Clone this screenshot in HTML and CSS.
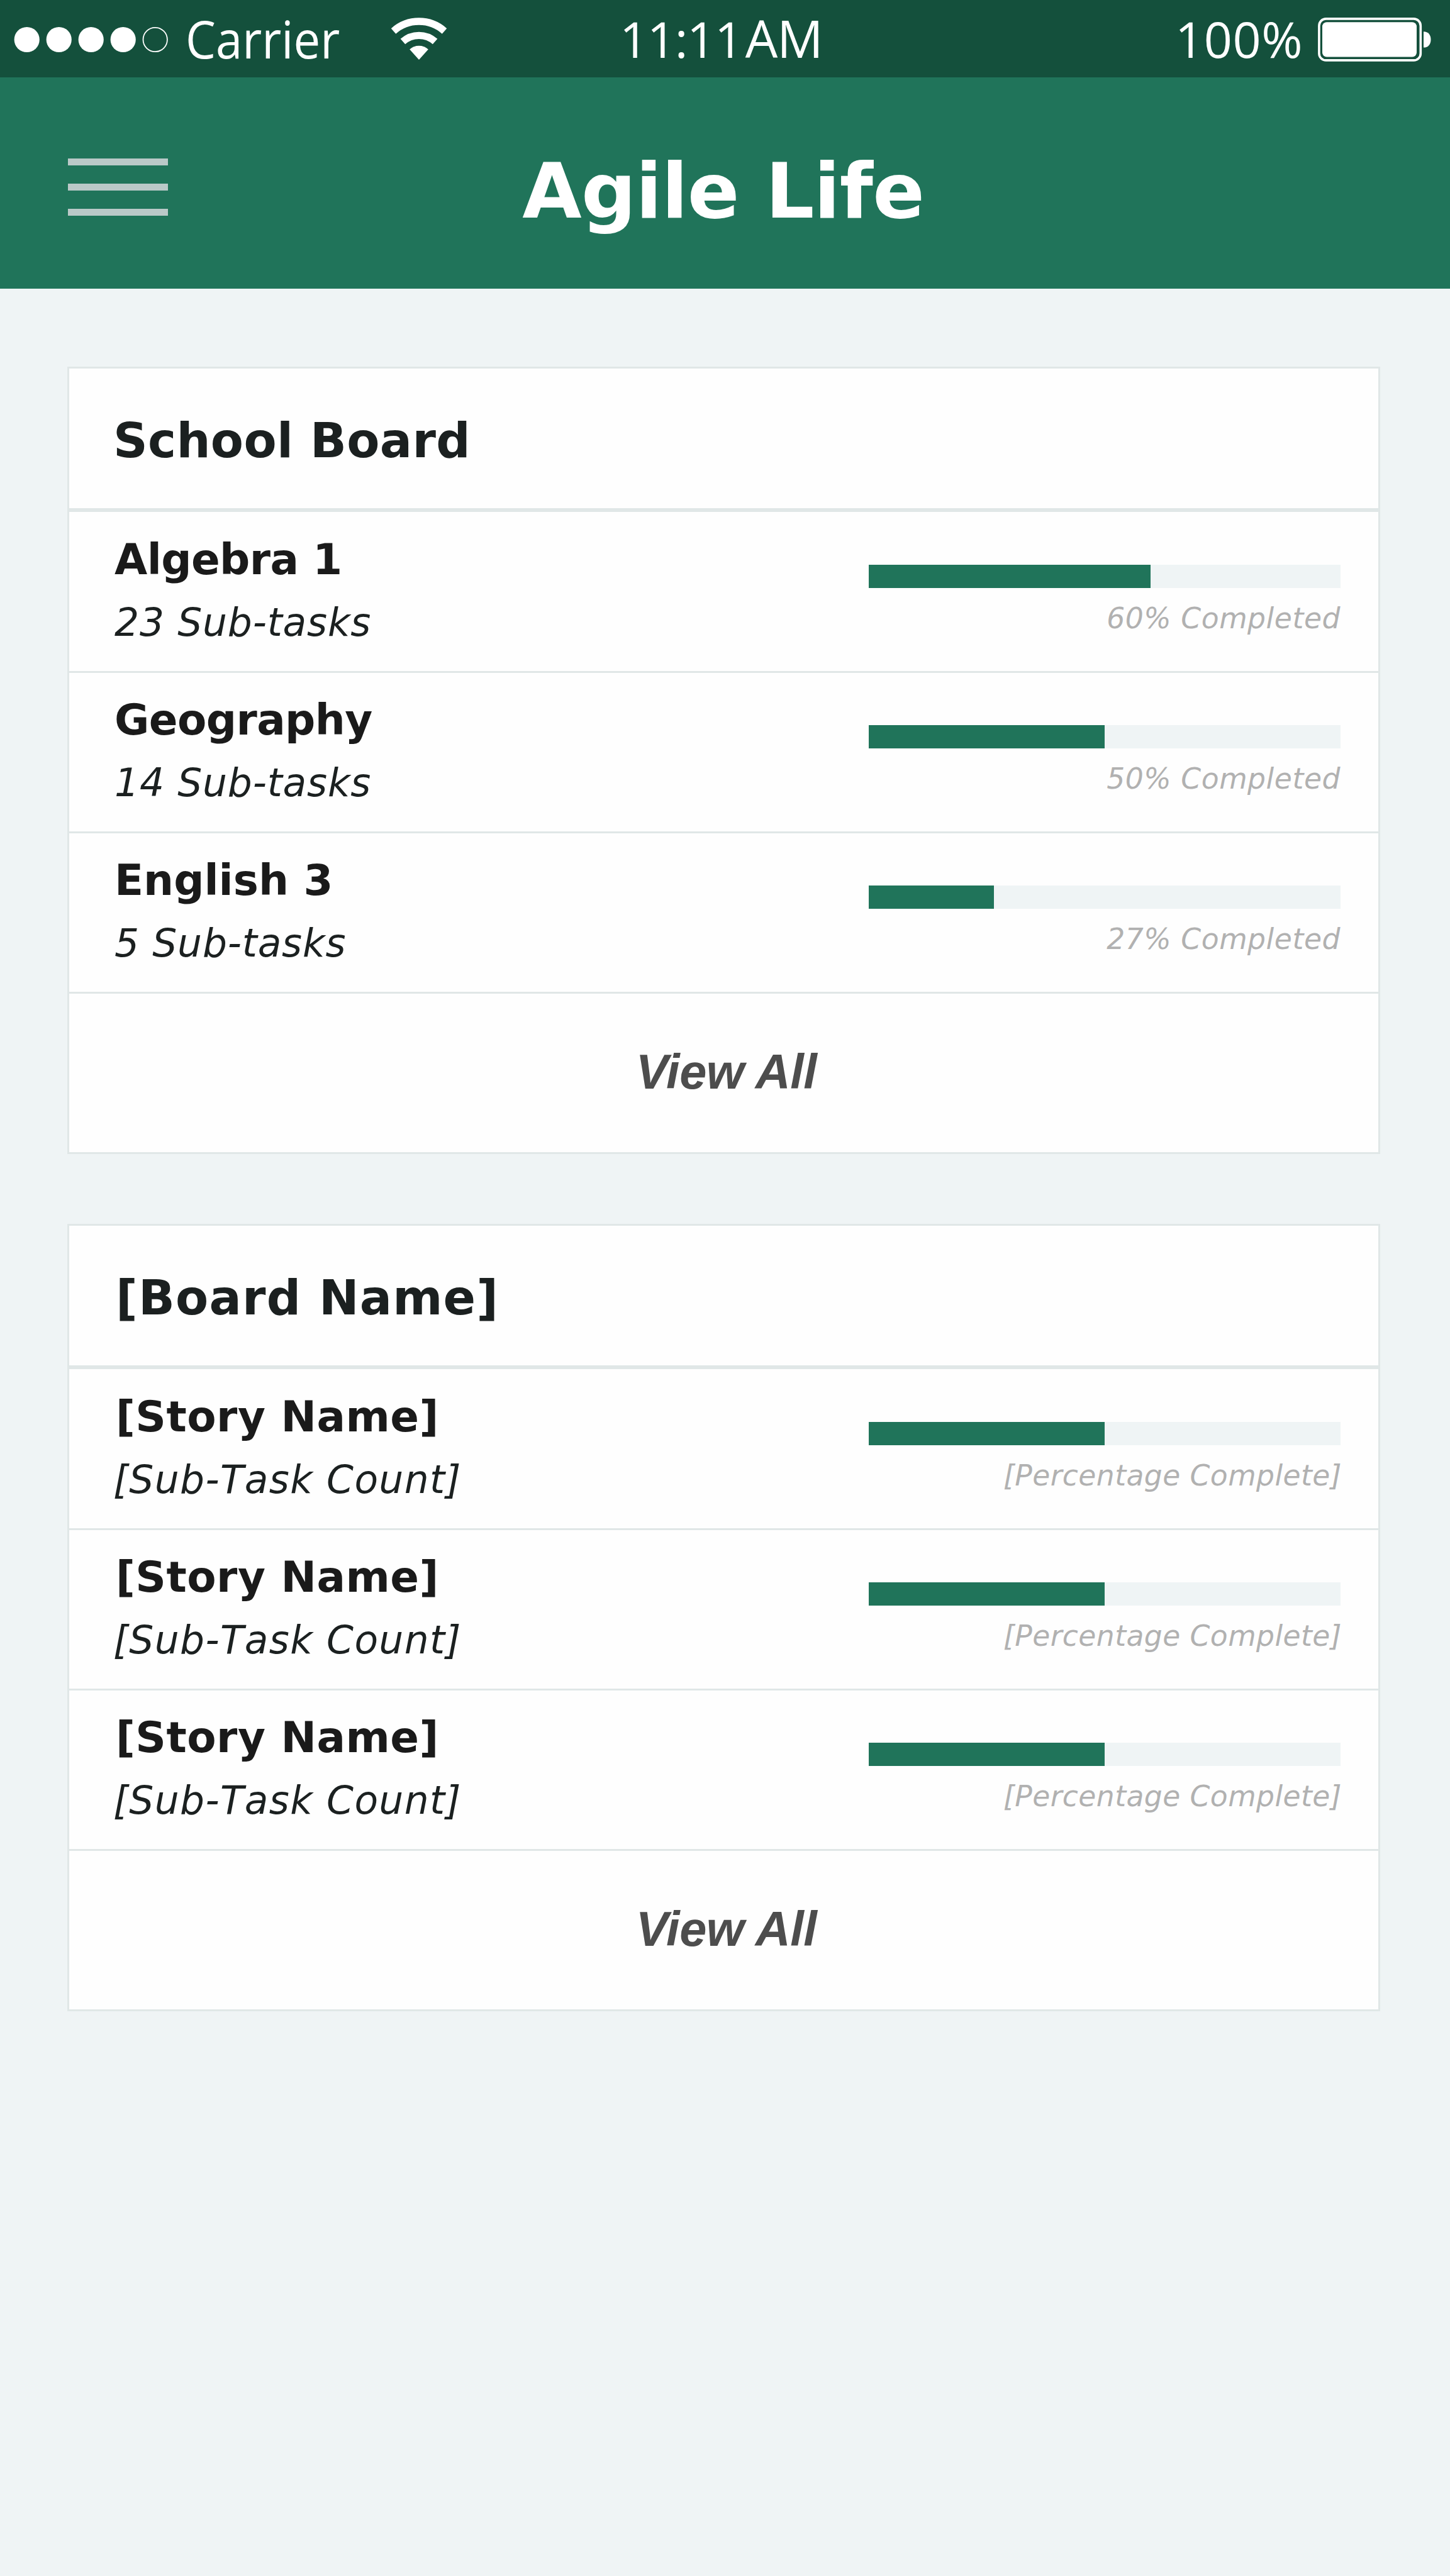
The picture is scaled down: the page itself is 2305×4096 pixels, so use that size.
FILE: index.html
```html
<!DOCTYPE html>
<html lang="en">
<head>
<meta charset="utf-8">
<title>Agile Life</title>
<link rel="stylesheet" href="styles.css">
</head>
<body>
<div class="status-bar">
  <svg class="signal" viewBox="0 0 248 44" aria-hidden="true">
    <circle cx="21.7" cy="22" r="20.1"/>
    <circle cx="72.7" cy="22" r="20.1"/>
    <circle cx="123.7" cy="22" r="20.1"/>
    <circle cx="174.7" cy="22" r="20.1"/>
    <circle class="signal-empty" cx="225.7" cy="22" r="19.2"/>
  </svg>
  <span class="carrier">Carrier</span>
  <svg class="wifi" viewBox="-45 -67 90 68" aria-hidden="true">
    <path class="wifi-arc" d="M-40.5-45.6A61 61 0 0 1 40.5-45.6"/>
    <path class="wifi-arc" d="M-25.6-28.9A38.6 38.6 0 0 1 25.6-28.9"/>
    <path d="M0 0L-14.8-16.5A22.1 22.1 0 0 1 14.8-16.5Z"/>
  </svg>
  <span class="time">11:11<span class="meridiem">AM</span></span>
  <span class="charge">100%</span>
  <svg class="battery" viewBox="0 0 180 70" aria-hidden="true">
    <rect class="battery-case" x="1.9" y="1.9" width="161.4" height="66" rx="11"/>
    <rect x="7" y="7.3" width="150" height="55.2" rx="7"/>
    <path d="M168 22.2C175.5 22.2 179.5 27.5 179.5 34.9S175.5 47.6 168 47.6Z"/>
  </svg>
</div>

<header class="app-header">
  <div class="menu"><i></i><i></i><i></i></div>
  <h1>Agile Life</h1>
</header>

<main class="boards">
  <section class="board">
    <h2>School Board</h2>
    <div class="story">
      <div class="story-text"><h3 class="tight">Algebra 1</h3><p>23 Sub-tasks</p></div>
      <div class="progress"><div class="track"><div class="fill" style="width:59.7%"></div></div><span>60% Completed</span></div>
    </div>
    <div class="story">
      <div class="story-text"><h3 class="tight">Geography</h3><p>14 Sub-tasks</p></div>
      <div class="progress"><div class="track"><div class="fill" style="width:50%"></div></div><span>50% Completed</span></div>
    </div>
    <div class="story">
      <div class="story-text"><h3>English 3</h3><p>5 Sub-tasks</p></div>
      <div class="progress"><div class="track"><div class="fill" style="width:26.5%"></div></div><span>27% Completed</span></div>
    </div>
    <div class="view-all">View All</div>
  </section>

  <section class="board template">
    <h2>[Board Name]</h2>
    <div class="story">
      <div class="story-text"><h3>[Story Name]</h3><p>[Sub-Task Count]</p></div>
      <div class="progress"><div class="track"><div class="fill" style="width:50%"></div></div><span>[Percentage Complete]</span></div>
    </div>
    <div class="story">
      <div class="story-text"><h3>[Story Name]</h3><p>[Sub-Task Count]</p></div>
      <div class="progress"><div class="track"><div class="fill" style="width:50%"></div></div><span>[Percentage Complete]</span></div>
    </div>
    <div class="story">
      <div class="story-text"><h3>[Story Name]</h3><p>[Sub-Task Count]</p></div>
      <div class="progress"><div class="track"><div class="fill" style="width:50%"></div></div><span>[Percentage Complete]</span></div>
    </div>
    <div class="view-all">View All</div>
  </section>
</main>
</body>
</html>
```
FILE: styles.css
```css
* { box-sizing: border-box; margin: 0; padding: 0; }

body {
  min-height: 4096px;
  background: #eff4f5;
  font-family: "DejaVu Sans", Verdana, sans-serif;
}

/* Status bar */
.status-bar {
  display: flex;
  align-items: center;
  height: 123px;
  padding-left: 21px;
  background: #14503c;
  color: #fff;
  font-family: "Open Sans", "Noto Sans", sans-serif;
  font-size: 79px;
  line-height: 123px;
  white-space: nowrap;
}
.status-bar svg { fill: #fff; flex: none; }
.signal { width: 248px; height: 44px; margin-top: 2px; }
.status-bar .signal-empty { fill: none; stroke: #fff; stroke-width: 1.8; }
.carrier {
  flex: none;
  width: 326px;
  margin-left: 26px;
  font-size: 82.6px;
  transform: scaleX(.921);
  transform-origin: left;
}
.wifi { width: 90px; height: 68px; }
.status-bar .wifi-arc { fill: none; stroke: #fff; stroke-width: 11.3; }
.time { flex: none; width: 884px; margin-left: 274px; letter-spacing: -1.33px; }
.meridiem { margin-left: 5px; font-size: 81.5px; line-height: 0; letter-spacing: -1px; }
.charge { flex: none; width: 226px; margin-left: -1px; letter-spacing: .6px; }
.battery { width: 180px; height: 70px; margin: 2px 0 0 1px; }
.status-bar .battery-case { fill: none; stroke: #fff; stroke-width: 3.6; }

/* App header */
.app-header {
  display: flex;
  height: 336px;
  background: #20745a;
}
.menu {
  display: flex;
  flex-direction: column;
  gap: 28.6px;
  width: 159px;
  margin: 129.3px 0 0 107.6px;
}
.menu i { height: 11.2px; background: #bac9c8; }
h1 {
  margin-left: 563.6px;
  padding-top: 27px;
  color: #fff;
  font-size: 122px;
  line-height: 309px;
  letter-spacing: -.69px;
}

/* Boards */
.boards {
  display: flex;
  flex-direction: column;
  gap: 111px;
  padding: 124px 111px 0 107px;
}
.board { border: 3px solid #e0e7e7; background: #fefefe; }
h2 {
  height: 228px;
  padding: 4px 0 0 70px;
  border-bottom: 6px solid #e0e7e7;
  color: #1b2020;
  font-size: 76px;
  line-height: 222px;
  letter-spacing: .32px;
}
.story {
  display: flex;
  justify-content: space-between;
  height: 255px;
  padding: 0 60px 0 72px;
  border-bottom: 3px solid #e0e7e7;
}
h2 + .story { height: 256px; padding-top: 1px; }
.story-text { padding-top: 30px; }
h3 {
  color: #1a1a1a;
  font-size: 67.5px;
  line-height: 90px;
}
h3.tight { letter-spacing: -.6px; }
p {
  margin-top: 15px;
  color: #1b2020;
  font-size: 61.5px;
  font-style: italic;
  line-height: 80px;
  letter-spacing: .8px;
  font-kerning: none;
}
.progress {
  display: flex;
  flex-direction: column;
  width: 750px;
  padding-top: 83px;
}
.track { height: 37px; background: #eff4f5; }
.fill { height: 100%; background: #20745a; }
.progress span {
  margin-top: 19px;
  color: #b1b1b1;
  font-size: 45.6px;
  font-style: italic;
  line-height: 60px;
  letter-spacing: .56px;
  text-align: right;
}
.view-all {
  height: 252px;
  padding: 0 0 3px 8px;
  color: #4d4d4d;
  font: italic bold 77.5px/249px "Liberation Sans", Arial, sans-serif;
  letter-spacing: -.5px;
  text-align: center;
}

/* Template board with bracketed placeholders */
.template h2 { padding-left: 74px; letter-spacing: 1.2px; }
.template h3 { margin-left: 2px; letter-spacing: .5px; }
.template p { margin-left: -2px; letter-spacing: 1.34px; }
.template .progress span { margin-right: -2px; letter-spacing: .43px; }
```
